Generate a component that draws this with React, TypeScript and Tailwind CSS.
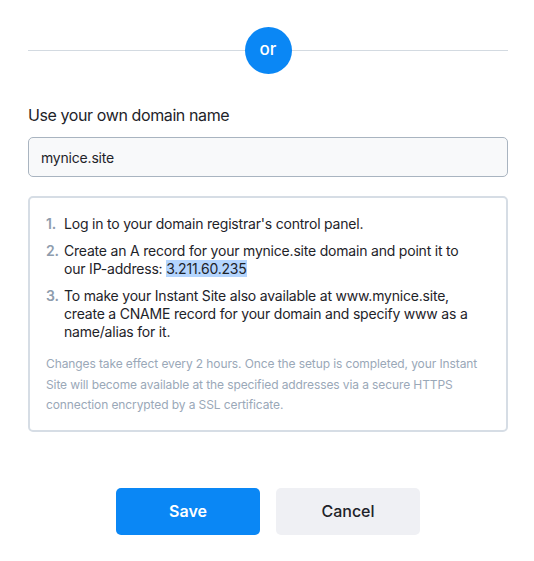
import React from "react";

export default function App() {
  const font = { fontFamily: "Inter, 'Liberation Sans', sans-serif" };
  return (
    <div className="w-[534px] h-[561px] bg-white text-[#1e2329]" style={font}>
      <div className="pl-[28px] pr-[26px] pt-[27px]">
        <div className="relative flex items-center justify-center h-[47px]">
          <div className="absolute left-0 right-0 top-[23px] h-px bg-[#d3dae1]" />
          <div className="relative w-[47px] h-[47px] rounded-full bg-[#0a87f5] flex items-center justify-center text-white text-[17px] font-medium leading-none pb-[2px]">
            or
          </div>
        </div>
        <div className="mt-[31px] text-[16px] leading-[20px] tracking-[-0.4px]">Use your own domain name</div>
        <div className="mt-[12px] h-[40px] rounded-[5px] border border-[#a9b4c0] bg-[#f8f9fa] flex items-center px-[12px] text-[14px] tracking-[-0.2px]">
          mynice.site
        </div>
        <div className="mt-[19px] rounded-[5px] border-2 border-[#d6dde5] pl-[16px] pr-[16px] pt-[17px] pb-[14px]">
          <ol className="flex flex-col gap-[9px] pr-[10px] text-[14px] leading-[18px] tracking-[-0.2px]">
            <li className="flex">
              <span className="w-[18px] shrink-0 font-semibold text-[#8e9cad]">1.</span>
              <span>Log in to your domain registrar's control panel.</span>
            </li>
            <li className="flex">
              <span className="w-[18px] shrink-0 font-semibold text-[#8e9cad]">2.</span>
              <span>
                Create an A record for your mynice.site domain and point it to our IP-address:{" "}
                <span className="bg-[#b4d5fe]">3.211.60.235</span>
              </span>
            </li>
            <li className="flex">
              <span className="w-[18px] shrink-0 font-semibold text-[#8e9cad]">3.</span>
              <span>
                To make your Instant Site also available at www.mynice.site, create a CNAME record for your domain and specify www as a name/alias for it.
              </span>
            </li>
          </ol>
          <p className="mt-[13px] text-[12px] leading-[20.5px] tracking-[-0.1px] text-[#9aa8b8]">
            Changes take effect every 2 hours. Once the setup is completed, your Instant Site will become available at the specified addresses via a secure HTTPS connection encrypted by a SSL certificate.
          </p>
        </div>
        <div className="mt-[56px] flex justify-center gap-[16px]">
          <button className="w-[144px] h-[47px] rounded-[5px] bg-[#0a87f5] text-white text-[16px] font-semibold">
            Save
          </button>
          <button className="w-[144px] h-[47px] rounded-[5px] bg-[#eff0f4] text-[#1e2329] text-[16px] font-medium">
            Cancel
          </button>
        </div>
      </div>
    </div>
  );
}
